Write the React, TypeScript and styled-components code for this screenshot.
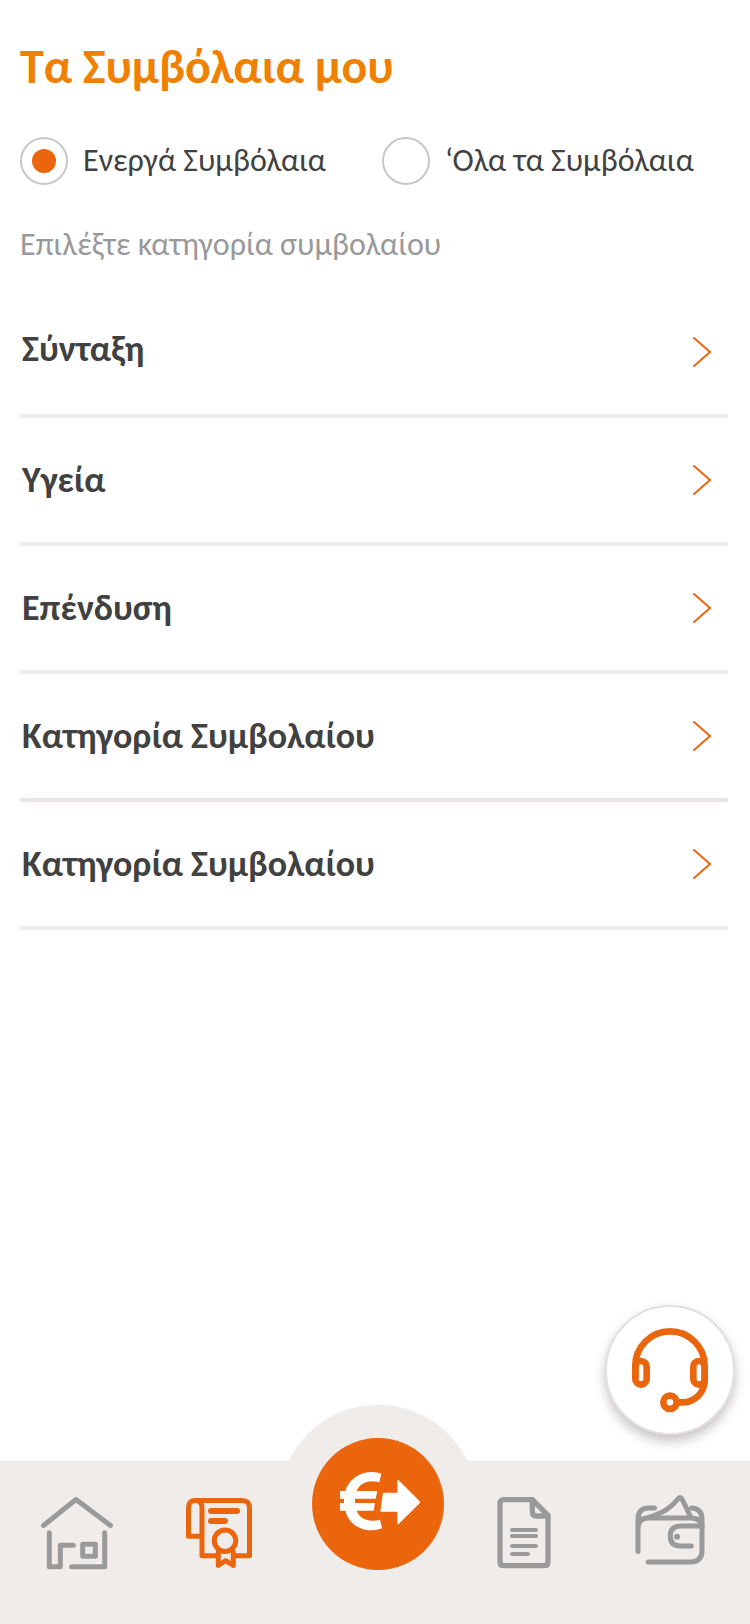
import React, { useState } from "react";
import styled, { createGlobalStyle } from "styled-components";

const color = {
  title: "#f08000",
  accent: "#eb650d",
  text: "#414141",
  muted: "#999999",
  ring: "#c8c8c8",
  line: "#f0ecea",
  lineStrong: "#e9e4e1",
  bar: "#f0ecea",
  icon: "#9a9a9a",
};

const GlobalStyle = createGlobalStyle`
  *, *::before, *::after { box-sizing: border-box; }
  body {
    margin: 0;
    background: #fff;
    color: ${color.text};
    font-family: Carlito, Calibri, Lato, sans-serif;
  }
  button, input { font: inherit; color: inherit; }
`;

const Screen = styled.div`
  position: relative;
  display: flex;
  flex-direction: column;
  min-height: 100vh;
`;

const Main = styled.main`
  flex: 1;
  padding: 37px 22px 100px 20px;
`;

const Title = styled.h1`
  margin: 0;
  font-size: 48px;
  line-height: 60px;
  font-weight: 700;
  color: ${color.title};
`;

const Filter = styled.fieldset`
  display: flex;
  flex-wrap: wrap;
  gap: 16px 56px;
  margin: 40px 0 0;
  padding: 0;
  border: 0;
`;

const Option = styled.label`
  display: flex;
  align-items: center;
  gap: 15px;
  font-size: 32px;
  line-height: 48px;
  cursor: pointer;
`;

const Radio = styled.input`
  appearance: none;
  flex: none;
  display: grid;
  place-items: center;
  width: 48px;
  height: 48px;
  margin: 0;
  border: 2px solid ${color.ring};
  border-radius: 50%;

  &:checked::before {
    content: "";
    width: 24px;
    height: 24px;
    border-radius: 50%;
    background: ${color.accent};
  }
`;

const Hint = styled.p`
  margin: 36px 0 0;
  font-size: 32px;
  line-height: 48px;
  color: ${color.muted};
`;

const CategoryList = styled.ul`
  margin: 21px 0 0;
  padding: 0;
  list-style: none;
`;

const CategoryRow = styled.button<{ $strong?: boolean }>`
  display: flex;
  align-items: center;
  justify-content: space-between;
  width: 100%;
  height: 128px;
  padding: 0 16px 0 2px;
  border: 0;
  border-bottom: 4px solid ${(p) => (p.$strong ? color.lineStrong : color.line)};
  background: none;
  text-align: left;
  cursor: pointer;
`;

const CategoryName = styled.span`
  font-size: 36px;
  line-height: 44px;
  font-weight: 700;

  li:first-child & {
    padding-bottom: 6px;
  }
`;

const ChevronIcon = styled.svg`
  flex: none;
  width: 20px;
  height: 32px;
  fill: none;
  stroke: ${color.accent};
  stroke-width: 2;
  stroke-linecap: round;
`;

const SupportButton = styled.button`
  position: absolute;
  right: 15px;
  bottom: 189px;
  width: 130px;
  height: 130px;
  padding: 0;
  border: 2px solid #e5e0dc;
  border-radius: 50%;
  background: #fff;
  box-shadow: 0 6px 12px rgba(0, 0, 0, 0.24);
  cursor: pointer;

  svg {
    display: block;
    width: 100%;
    height: 100%;
    fill: none;
    stroke: ${color.accent};
    stroke-width: 20;
  }
`;

const TabBar = styled.nav`
  display: grid;
  grid-template-columns:
    minmax(0, 126fr) minmax(0, 158fr) minmax(0, 160fr)
    minmax(0, 132fr) minmax(0, 160fr);
  justify-items: center;
  align-items: start;
  padding: 31px 0 51px 14px;
  background: ${color.bar};
  filter: drop-shadow(0 -1px 1px rgba(0, 0, 0, 0.1));
`;

const Tab = styled.a<{ $active?: boolean }>`
  display: block;
  width: 80px;
  height: 80px;
  color: ${(p) => (p.$active ? color.accent : color.icon)};

  svg {
    display: block;
    width: 80px;
    height: 80px;
    fill: none;
    stroke: currentColor;
    stroke-linecap: round;
    stroke-linejoin: round;
  }
`;

const PaySlot = styled.div`
  display: grid;
  place-items: center;
  width: 196px;
  height: 196px;
  margin: -87px 0 -29px;
  border-radius: 50%;
  background: ${color.bar};
`;

const PayButton = styled.button`
  width: 132px;
  height: 132px;
  padding: 0;
  border: 0;
  border-radius: 50%;
  background: ${color.accent};
  cursor: pointer;

  svg {
    display: block;
    width: 100%;
    height: 100%;
    fill: #fff;
  }
`;

const categories = [
  { name: "Σύνταξη" },
  { name: "Υγεία" },
  { name: "Επένδυση" },
  { name: "Κατηγορία Συμβολαίου", strong: true },
  { name: "Κατηγορία Συμβολαίου" },
];

const filters = [
  { id: "active", label: "Ενεργά Συμβόλαια" },
  { id: "all", label: "‘Ολα τα Συμβόλαια" },
];

const HomeIcon = () => (
  <svg viewBox="0 0 80 80" strokeWidth="5" aria-hidden="true">
    <path d="M6.5 32.5 39 6.5 73.5 32.5" />
    <path d="M12.3 39.7V73.7H23.3V52.3H36.3" />
    <path d="M34.7 73.7H67.7V39.7" />
    <path d="M45.7 51.3H58.3V63.3H45.7Z" />
  </svg>
);

const ContractIcon = () => (
  <svg viewBox="0 0 80 80" strokeWidth="5" aria-hidden="true">
    <path d="M23 43.3H9.5V14.5Q9.5 7.5 16.5 7.5Q23 7.5 23 14.5V62.7H37" />
    <path d="M16.5 7.5H63Q70.5 7.5 70.5 15V62.7H56" />
    <circle cx="46" cy="47.7" r="10.7" />
    <path d="M39.3 59V72.5L46.7 67.7 54.3 72.5V59" />
    <path strokeWidth="6" d="M32 18H58M32 28H46" />
  </svg>
);

const DocumentIcon = () => (
  <svg viewBox="0 0 80 80" strokeWidth="5.3" aria-hidden="true">
    <path d="M48.3 6.7H20Q16 6.7 16 10.7V68.7Q16 72.7 20 72.7H60Q64 72.7 64 68.7V22.3Z" />
    <path d="M48.3 6.7V18.5Q48.3 23 52.8 23H64" />
    <path strokeWidth="4" d="M28 37H52M28 43H52M28 53H52M28 61H44" />
  </svg>
);

const WalletIcon = () => (
  <svg viewBox="0 0 80 80" strokeWidth="5" aria-hidden="true">
    <path d="M8 58.5V26Q8 15 19 15H24.5" />
    <path d="M8 34Q9 25 18 25H61Q71 25 72 34" />
    <path d="M61.5 15Q72 15.5 72 26V57.5Q72 69 60.5 69H18.2" />
    <path d="M18 24.7C33 19.5 41 15 48 6Q50 3 52 6L60.5 23.5" />
    <path d="M72 33H50.5Q40.3 33 40.3 43T50.5 53H61.3" />
    <circle cx="47" cy="43.7" r="3" fill="currentColor" stroke="none" />
  </svg>
);

const PayIcon = () => (
  <svg viewBox="126 143 396 396" aria-hidden="true">
    <path d="M334 250 328 276Q318 273 306 273C284 273 267 285 260 302H322L317 325H255V338H315L311 361H260C267 380 284 391 308 391Q320 391 330 388L336 414Q322 420 304 420C266 420 234 396 226 361H210V338H222V325H210V302H226C236 268 268 245 306 245Q322 245 334 250Z" />
    <path d="M339 307H382V272Q382 267 386 270L449 333Q451 336 449 339L386 401Q382 404 382 400V364H331Z" />
  </svg>
);

const HeadsetIcon = () => (
  <svg viewBox="51 50 378 378" aria-hidden="true">
    <path d="M136 262V227A104 104 0 0 1 344 227V270A66 66 0 0 1 278 336H262" />
    <rect x="136" y="212" width="34" height="71" rx="17" />
    <rect x="310" y="212" width="34" height="71" rx="17" />
    <circle cx="240" cy="336" r="20" />
  </svg>
);

export default function App() {
  const [filter, setFilter] = useState("active");

  return (
    <Screen>
      <GlobalStyle />
      <Main>
        <Title>Τα Συμβόλαια μου</Title>
        <Filter aria-label="Συμβόλαια">
          {filters.map((f) => (
            <Option key={f.id}>
              <Radio
                type="radio"
                name="filter"
                value={f.id}
                checked={filter === f.id}
                onChange={() => setFilter(f.id)}
              />
              {f.label}
            </Option>
          ))}
        </Filter>
        <Hint>Επιλέξτε κατηγορία συμβολαίου</Hint>
        <CategoryList>
          {categories.map(({ name, strong }, i) => (
            <li key={i}>
              <CategoryRow type="button" $strong={strong}>
                <CategoryName>{name}</CategoryName>
                <ChevronIcon viewBox="0 0 20 32" aria-hidden="true">
                  <path d="M2 2 18 16 2 30" />
                </ChevronIcon>
              </CategoryRow>
            </li>
          ))}
        </CategoryList>
      </Main>

      <TabBar aria-label="Μενού">
        <Tab href="#home" aria-label="Αρχική">
          <HomeIcon />
        </Tab>
        <Tab href="#contracts" aria-label="Συμβόλαια" aria-current="page" $active>
          <ContractIcon />
        </Tab>
        <PaySlot>
          <PayButton type="button" aria-label="Πληρωμή">
            <PayIcon />
          </PayButton>
        </PaySlot>
        <Tab href="#documents" aria-label="Έγγραφα">
          <DocumentIcon />
        </Tab>
        <Tab href="#wallet" aria-label="Πορτοφόλι">
          <WalletIcon />
        </Tab>
      </TabBar>

      <SupportButton type="button" aria-label="Υποστήριξη">
        <HeadsetIcon />
      </SupportButton>
    </Screen>
  );
}
